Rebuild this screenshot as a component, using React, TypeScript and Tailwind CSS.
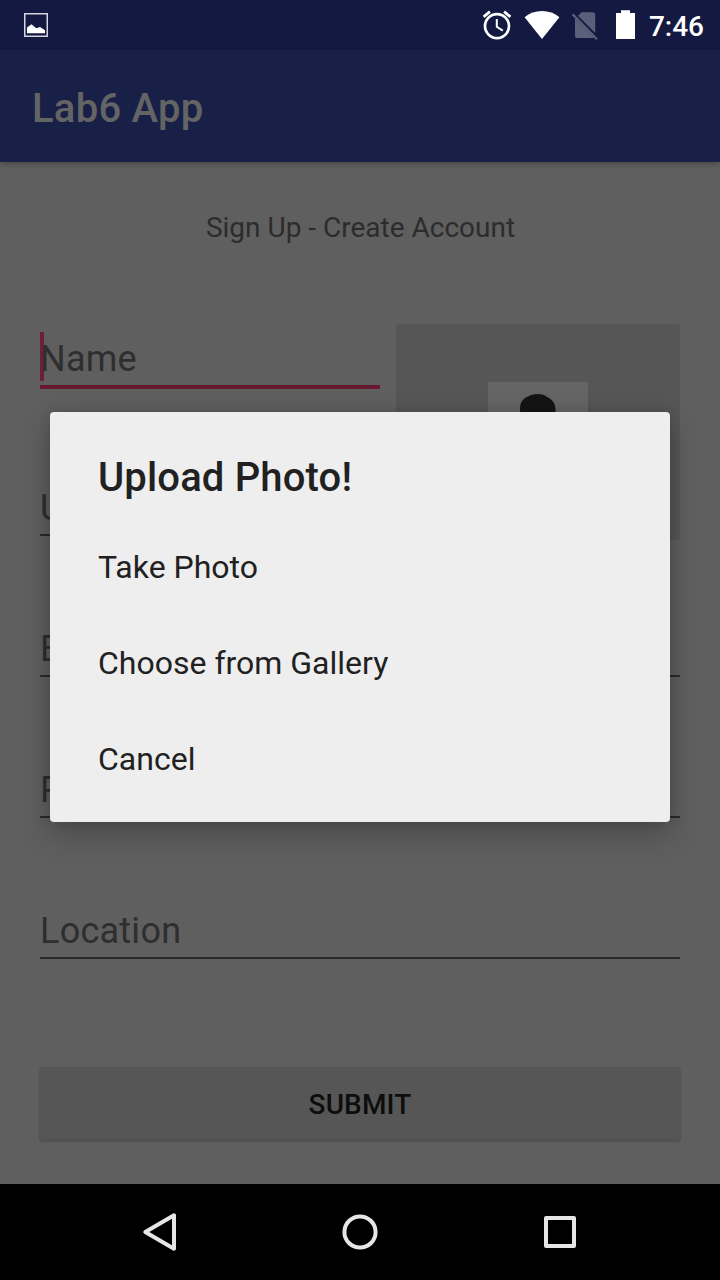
import React from 'react';

function StatusBar() {
  return (
    <div className="flex h-[50px] shrink-0 items-center bg-[#131940] pl-6 pr-4 text-white">
      <svg className="h-6 w-6" viewBox="0 0 24 24">
        <rect x="0.75" y="0.75" width="22.5" height="22.5" fill="none" stroke="#d4d5dd" strokeWidth="1.5" />
        <path d="M3 20.3V14.5L7.5 11.3L12.3 15.3L16 13.9L21 17.2V20.3Z" fill="#fff" />
      </svg>
      <svg className="ml-auto h-[30px] w-[30px]" viewBox="482 10 30 30" fill="none" stroke="#fff">
        <circle cx="497" cy="26.1" r="12" strokeWidth="2.7" />
        <path d="M483.6 16.8L489.9 11.6M510.4 16.8L504.1 11.6" strokeWidth="2.8" />
        <path d="M496.8 19V26.8L502.8 30.6" strokeWidth="2" />
      </svg>
      <svg className="ml-3 h-[30px] w-9" viewBox="524 10 36 30">
        <path d="M542 39L524.6 17.2C529.4 13.2 535.4 11 542 11S554.6 13.2 559.4 17.2Z" fill="#fff" />
      </svg>
      <svg className="ml-3 h-[30px] w-[26px]" viewBox="572 10 26 30">
        <path d="M578 15.8L581.6 12.2H593Q595.2 12.2 595.2 14.4V33ZM575 18.3L594 37.2Q593.2 38.1 592 38.1H577.2Q575 38.1 575 35.9Z" fill="#5c5f7a" />
        <path d="M572.7 14.3L597 39.2" stroke="#5c5f7a" strokeWidth="2.2" />
      </svg>
      <svg className="ml-[18px] h-[30px] w-5" viewBox="616 10 20 30">
        <path d="M616 13H621V10.2H630V13H635V39H616Z" fill="#fff" />
      </svg>
      <span className="ml-[13px] mt-[3px] text-[28px] font-medium leading-[33px]">7:46</span>
    </div>
  );
}

function Field({ label, focused = false }: { label: string; focused?: boolean }) {
  return (
    <div
      className={
        focused
          ? 'relative border-b-4 border-[#66192f] pb-[5px]'
          : 'relative border-b-2 border-[#2a2a2a] pb-[5px]'
      }
    >
      {focused && <span className="absolute -top-1.5 left-0 h-[49px] w-1 bg-[#6c1e3b]" />}
      <div className="relative text-[36px] leading-[42px] tracking-[0.25px] text-[#2e2e2e]">{label}</div>
    </div>
  );
}

function SignUpForm() {
  return (
    <main className="flex h-[1022px] shrink-0 flex-col bg-[#5f5f5f] px-10 pt-[49px]">
      <h2 className="pl-px text-center text-[28px] leading-[33px] text-[#2c2c2c]">Sign Up - Create Account</h2>
      <div className="mt-20 flex h-[216px] gap-4">
        <div className="flex w-[340px] flex-col gap-[98px] pt-[14px]">
          <Field label="Name" focused />
          <Field label="Username" />
        </div>
        <div className="flex h-[216px] w-[284px] justify-center rounded bg-[#565656] pt-[58px]">
          <svg className="h-[100px] w-[100px]" viewBox="0 0 100 100">
            <rect width="100" height="100" fill="#656565" />
            <path d="M32 27C32 18 37 16 40 14.5C45 11 55 11 60 15.5C65 18 67.5 22 67.5 28C67 46 60 55 50 55S33 46 32 27Z" fill="#141414" />
            <path d="M15 100C15 75 30 64 50 64S85 75 85 100Z" fill="#141414" />
          </svg>
        </div>
      </div>
      <div className="mt-[88px] flex flex-col gap-[92px]">
        <Field label="Email" />
        <Field label="Password" />
        <Field label="Location" />
      </div>
      <button className="-mx-px mt-[108px] h-[72px] shrink-0 rounded bg-[#565656] pt-[3px] text-[28px] font-medium leading-[33px] tracking-[0.15px] text-[#0d0d0d] shadow-[0_3px_2px_0px_rgba(0,0,0,0.15)]">
        SUBMIT
      </button>
    </main>
  );
}

function NavigationBar() {
  return (
    <nav className="flex h-24 shrink-0 items-center justify-center gap-40 bg-black">
      <svg className="h-10 w-10" viewBox="140 1212 40 40" fill="none" stroke="#e6e6e6" strokeWidth="4" strokeLinejoin="round">
        <path d="M145.3 1232L174 1215.3V1248.7Z" />
      </svg>
      <svg className="h-10 w-10" viewBox="0 0 40 40" fill="none" stroke="#e6e6e6" strokeWidth="4">
        <circle cx="20" cy="20" r="15.6" />
      </svg>
      <svg className="h-10 w-10" viewBox="0 0 40 40" fill="none" stroke="#e6e6e6" strokeWidth="4" strokeLinejoin="round">
        <rect x="6" y="6" width="28" height="28" />
      </svg>
    </nav>
  );
}

function UploadDialog() {
  return (
    <div
      role="dialog"
      className="absolute left-[50px] top-[412px] flex h-[410px] w-[620px] flex-col rounded bg-[#eeeeee] px-12 pt-[42px] text-[#212121] shadow-[0_12px_32px_0px_rgba(0,0,0,0.24),0_0px_12px_0px_rgba(0,0,0,0.12)]"
    >
      <h3 className="mb-[18px] text-[40px] font-medium leading-[47px] tracking-[0.15px]">Upload Photo!</h3>
      {['Take Photo', 'Choose from Gallery', 'Cancel'].map((item) => (
        <div key={item} className="flex h-24 items-center text-[32px] leading-[38px]">
          {item}
        </div>
      ))}
    </div>
  );
}

export default function App() {
  return (
    <div className="relative flex h-[1280px] w-[720px] flex-col overflow-hidden bg-black font-['Roboto',sans-serif]">
      <StatusBar />
      <header className="relative flex h-28 shrink-0 items-center bg-[#192048] px-8 pt-[5px] shadow-[0_2px_5px_rgba(0,0,0,0.25)]">
        <h1 className="text-[40px] font-medium leading-[47px] tracking-[0.25px] text-[#646464]">Lab6 App</h1>
      </header>
      <SignUpForm />
      <NavigationBar />
      <UploadDialog />
    </div>
  );
}
